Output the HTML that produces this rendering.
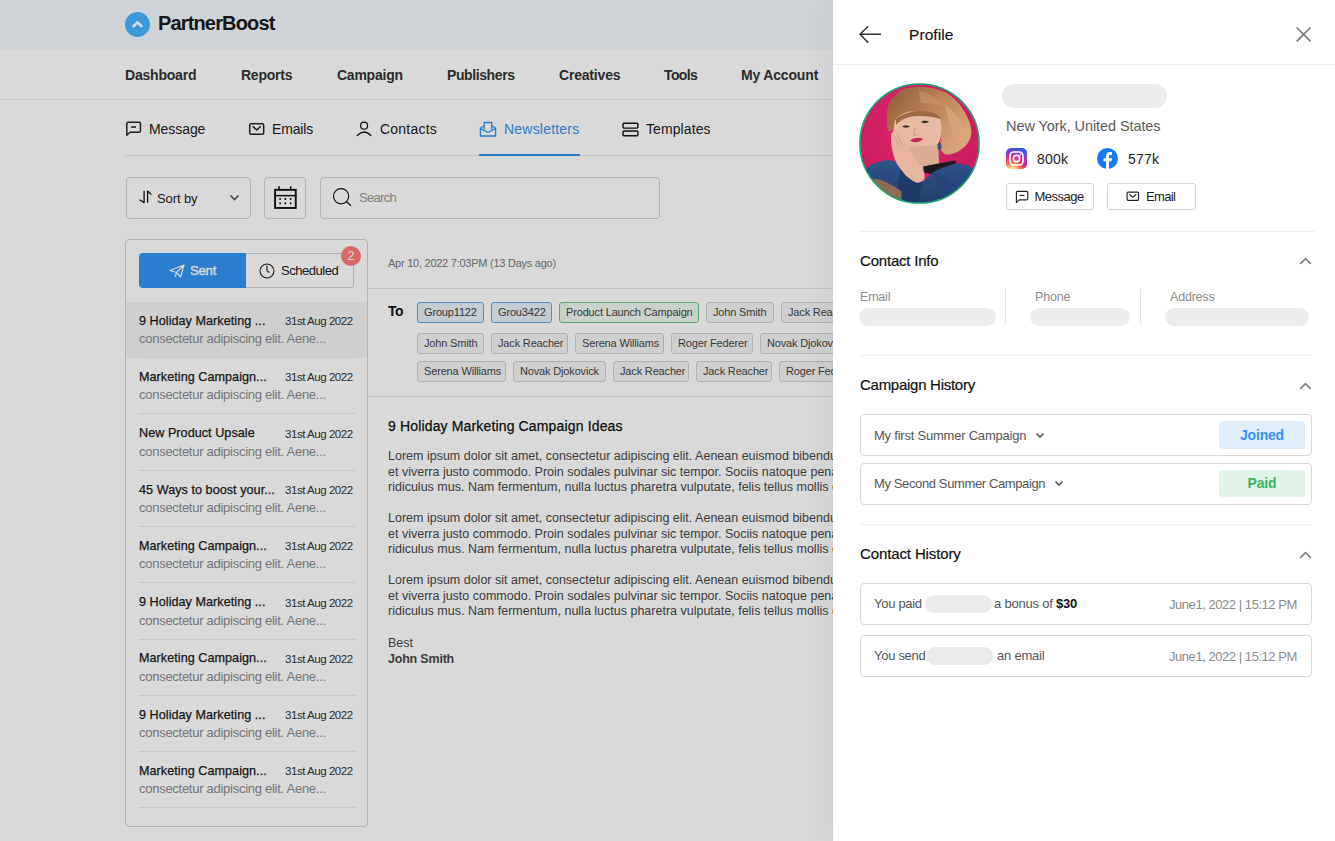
<!DOCTYPE html>
<html><head><meta charset="utf-8">
<style>
*{box-sizing:border-box;margin:0;padding:0}
html,body{width:1335px;height:841px;overflow:hidden;background:#fff;font-family:"Liberation Sans",sans-serif;color:#222}
.a{position:absolute;white-space:nowrap}
#app{position:absolute;left:0;top:0;width:1335px;height:841px;background:#fff;z-index:0}
#hdr{position:absolute;left:0;top:0;width:1335px;height:50px;background:#f4f9fe}
#nav{position:absolute;left:0;top:49px;width:1335px;height:50.5px;border-bottom:1px solid #ececec}
.nv{position:absolute;top:67.8px;font-size:14px;font-weight:700;color:#333;line-height:14px}
.st{position:absolute;top:122px;font-size:14px;color:#222;line-height:14px}
.ico{position:absolute}
#sub{position:absolute;left:125px;top:155px;width:708px;height:1px;background:#e6e6e6}
.box{position:absolute;border:1px solid #d2d2d2;border-radius:4px;background:#fff}
#panel{position:absolute;left:125px;top:239px;width:243px;height:588px;border:1px solid #d0d0d0;border-radius:4px;background:#fff}
.row{position:absolute;left:0;width:241px;height:56px}
.row .t{position:absolute;left:13px;top:13.2px;font-size:12.6px;font-weight:400;line-height:13px;color:#1a1a1a;letter-spacing:0.05px;-webkit-text-stroke:0.25px #1a1a1a}
.row .d{position:absolute;left:159px;top:13.5px;font-size:11.5px;line-height:12px;color:#333;letter-spacing:-0.45px}
.row .s{position:absolute;left:13px;top:30.6px;font-size:13px;line-height:13px;color:#8a8a8a;letter-spacing:-0.27px}
.row .ln{position:absolute;left:13px;right:11px;top:55.6px;height:1px;background:#ececec}
.chip{position:absolute;height:21px;border:1px solid #cfcfcf;background:#f4f4f4;border-radius:3px;font-size:11px;line-height:19.5px;padding:0 6px;color:#444;letter-spacing:-0.16px}
.chip.b{border-color:#62a4ea;background:#e6eff8}
.chip.g{border-color:#6cc88a;background:#eef7f0}
.p{position:absolute;left:388px;font-size:12.5px;line-height:15.5px;color:#474747;white-space:nowrap}
#ov{position:absolute;left:0;top:0;width:1335px;height:841px;background:rgba(0,0,0,0.15);z-index:1}
#drawer{z-index:2;position:absolute;left:833px;top:0;width:502px;height:841px;background:#fff;box-shadow:-10px 0 22px rgba(0,35,60,0.045)}
.dv{position:absolute;height:1px;background:#eeeeee}
.sk{position:absolute;background:#ececec;border-radius:12px}
.sec{position:absolute;left:27px;font-size:15px;line-height:15px;color:#111;letter-spacing:-0.2px;-webkit-text-stroke:0.2px #111}
.card{position:absolute;left:27px;width:452px;border:1px solid #d9d9d9;border-radius:4px;background:#fff}
.btn{position:absolute;height:27px;border:1px solid #d4d4d4;border-radius:3px;background:#fff;font-size:13px;line-height:25px;color:#222}
</style></head><body>
<div id="app">
  <div id="hdr">
    <div class="a" style="left:125px;top:12px;width:25px;height:25px;border-radius:50%;background:#47b4ff"></div>
    <svg class="a" style="left:125px;top:12px" width="25" height="25" viewBox="0 0 25 25"><path d="M8.5 14.2 L12.5 10.4 L16.5 14.2" fill="none" stroke="#fff" stroke-width="2.6" stroke-linecap="round" stroke-linejoin="round"/></svg>
    <div class="a" style="left:158px;top:13px;font-size:20px;line-height:20px;font-weight:700;color:#1c1c1c;letter-spacing:-0.85px">PartnerBoost</div>
  </div>
  <div id="nav"></div>
  <div class="nv" style="left:125px;letter-spacing:-0.21px">Dashboard</div>
  <div class="nv" style="left:241px;letter-spacing:-0.24px">Reports</div>
  <div class="nv" style="left:337px;letter-spacing:-0.24px">Campaign</div>
  <div class="nv" style="left:447px;letter-spacing:-0.4px">Publishers</div>
  <div class="nv" style="left:559px;letter-spacing:-0.19px">Creatives</div>
  <div class="nv" style="left:664px;letter-spacing:-0.6px">Tools</div>
  <div class="nv" style="left:741px;letter-spacing:-0.17px">My Account</div>

  <!-- subtabs -->
  <svg class="ico" style="left:125px;top:121px" width="17" height="16" viewBox="0 0 17 16"><path d="M1.8 14.3 V2.8 Q1.8 1.3 3.3 1.3 H14 Q15.5 1.3 15.5 2.8 V9.8 Q15.5 11.3 14 11.3 H5.2 Z" fill="none" stroke="#222" stroke-width="1.5" stroke-linejoin="round"/><path d="M6 6 H11" stroke="#222" stroke-width="1.5"/></svg>
  <div class="st" style="left:149px;letter-spacing:-0.07px">Message</div>
  <svg class="ico" style="left:248px;top:122px" width="17" height="14" viewBox="0 0 17 14"><rect x="1.7" y="1.7" width="14" height="10.6" rx="1.6" fill="none" stroke="#222" stroke-width="1.5"/><path d="M4.6 4.2 L8.7 8 L12.8 4.2" fill="none" stroke="#222" stroke-width="1.5"/></svg>
  <div class="st" style="left:272px;letter-spacing:-0.15px">Emails</div>
  <svg class="ico" style="left:350px;top:115px" width="30" height="25" viewBox="0 0 30 25"><circle cx="14.1" cy="10.7" r="3.5" fill="none" stroke="#111" stroke-width="1.2"/><path d="M7.3 20.5 Q14.1 13.5 20.8 20.5" fill="none" stroke="#111" stroke-width="1.3" stroke-linecap="round"/></svg>
  <div class="st" style="left:380px;letter-spacing:0.22px">Contacts</div>
  <svg class="ico" style="left:479px;top:121px" width="18" height="16" viewBox="0 0 18 16"><path d="M1.7 6.8 L5.2 4.8 M12.7 4.8 L16.3 6.8" fill="none" stroke="#3593f0" stroke-width="1.3"/><path d="M1.4 6.6 V14.5 Q1.4 15 1.9 15 H16.1 Q16.6 15 16.6 14.5 V6.6" fill="none" stroke="#3593f0" stroke-width="1.3"/><path d="M1.8 7.6 L9 11.6 L16.2 7.6" fill="none" stroke="#3593f0" stroke-width="1.3"/><path d="M5.2 8.6 V1.5 H12.7 V8.6" fill="none" stroke="#3593f0" stroke-width="1.3"/></svg>
  <div class="st" style="left:504px;letter-spacing:0.21px;color:#3593f0">Newsletters</div>
  <div class="a" style="left:479px;top:153.6px;width:101px;height:2.6px;background:#3593f0;z-index:2"></div>
  <svg class="ico" style="left:615px;top:115px" width="30" height="25" viewBox="0 0 30 25"><rect x="8" y="8.3" width="14.9" height="4.8" rx="1" fill="none" stroke="#111" stroke-width="1.4"/><rect x="8" y="16" width="14.9" height="4.8" rx="1" fill="none" stroke="#111" stroke-width="1.4"/></svg>
  <div class="st" style="left:646px;letter-spacing:0.09px">Templates</div>
  <div id="sub"></div>

  <!-- toolbar -->
  <div class="box" style="left:126px;top:177px;width:125px;height:42px"></div>
  <svg class="ico" style="left:139px;top:190px" width="14" height="14" viewBox="0 0 14 14"><path d="M5.1 0.8 V12.6 L0.6 9.8" fill="none" stroke="#111" stroke-width="1.25" stroke-linejoin="round"/><path d="M8.6 12.8 V1 L12.4 4.6" fill="none" stroke="#111" stroke-width="1.25" stroke-linejoin="round"/></svg>
  <div class="a" style="left:157px;top:191.5px;font-size:13px;line-height:13px;color:#222;letter-spacing:-0.1px">Sort by</div>
  <svg class="ico" style="left:229px;top:194px" width="11" height="8" viewBox="0 0 11 8"><path d="M1.5 1.5 L5.5 5.5 L9.5 1.5" fill="none" stroke="#555" stroke-width="1.6"/></svg>
  <div class="box" style="left:264px;top:177px;width:42px;height:42px"></div>
  <svg class="ico" style="left:273px;top:185px" width="25" height="25" viewBox="0 0 25 25"><rect x="2.05" y="4.85" width="20.7" height="18.1" fill="none" stroke="#111" stroke-width="1.9"/><path d="M1.5 10.65 H23.5" stroke="#111" stroke-width="1.5"/><path d="M6.1 1.2 V4.5 M17.7 1.2 V4.5" stroke="#111" stroke-width="1.5"/><g fill="#111"><rect x="6.3" y="12.9" width="1.6" height="2.2" rx="0.7"/><rect x="11.5" y="12.9" width="1.6" height="2.2" rx="0.7"/><rect x="16.8" y="12.9" width="1.6" height="2.2" rx="0.7"/><rect x="6.3" y="17.2" width="1.6" height="2.2" rx="0.7"/><rect x="11.5" y="17.2" width="1.6" height="2.2" rx="0.7"/><rect x="16.8" y="17.2" width="1.6" height="2.2" rx="0.7"/></g></svg>
  <div class="box" style="left:320px;top:177px;width:340px;height:42px"></div>
  <svg class="ico" style="left:330px;top:185px" width="24" height="24" viewBox="0 0 24 24"><circle cx="11.1" cy="11.2" r="7.6" fill="none" stroke="#111" stroke-width="1.2"/><path d="M16.6 16.7 L21 20.7" stroke="#111" stroke-width="1.2"/></svg>
  <div class="a" style="left:359px;top:191px;font-size:13px;line-height:13px;color:#9a9a9a;letter-spacing:-0.7px">Search</div>

  <!-- list panel -->
  <div id="panel">
    <div class="a" style="left:13px;top:13px;width:107px;height:35px;background:#3396f3;border-radius:4px 0 0 4px"></div>
    <div class="a" style="left:120px;top:13px;width:108px;height:35px;border:1px solid #cfcfcf;border-left:none;border-radius:0 4px 4px 0"></div>
    <svg class="ico" style="left:43px;top:24px" width="16" height="14" viewBox="0 0 16 14"><path d="M1 6.5 L15 1 L11.5 13 L7.5 8.5 Z M7.5 8.5 L15 1 M7.5 8.5 L6 13" fill="none" stroke="#fff" stroke-width="1.2" stroke-linejoin="round"/></svg>
    <div class="a" style="left:64px;top:23.8px;font-size:13px;line-height:13px;font-weight:400;color:#fff;letter-spacing:-0.15px;-webkit-text-stroke:0.4px #fff">Sent</div>
    <svg class="ico" style="left:133px;top:23px" width="16" height="16" viewBox="0 0 16 16"><circle cx="8" cy="8" r="7" fill="none" stroke="#222" stroke-width="1.1"/><path d="M8 2.5 V8 L10.5 9.5" fill="none" stroke="#222" stroke-width="1.1"/></svg>
    <div class="a" style="left:155px;top:23.8px;font-size:13px;line-height:13px;color:#222;letter-spacing:-0.47px">Scheduled</div>
    <div class="a" style="left:215px;top:6px;width:20px;height:20px;border-radius:50%;background:#ff7c7c;color:#fff;font-size:12.5px;line-height:20px;text-align:center">2</div>
  </div>
  <div id="rows" class="a" style="left:126px;top:301.5px;width:241px;height:520px">
    <div class="row" style="top:0.0px;background:#f4f4f4;"><div class="t">9 Holiday Marketing ...</div><div class="d">31st Aug 2022</div><div class="s">consectetur adipiscing elit. Aene...</div><div class="ln"></div></div>
    <div class="row" style="top:56.3px;"><div class="t">Marketing Campaign...</div><div class="d">31st Aug 2022</div><div class="s">consectetur adipiscing elit. Aene...</div><div class="ln"></div></div>
    <div class="row" style="top:112.6px;"><div class="t">New Product Upsale</div><div class="d">31st Aug 2022</div><div class="s">consectetur adipiscing elit. Aene...</div><div class="ln"></div></div>
    <div class="row" style="top:168.9px;"><div class="t">45 Ways to boost your...</div><div class="d">31st Aug 2022</div><div class="s">consectetur adipiscing elit. Aene...</div><div class="ln"></div></div>
    <div class="row" style="top:225.2px;"><div class="t">Marketing Campaign...</div><div class="d">31st Aug 2022</div><div class="s">consectetur adipiscing elit. Aene...</div><div class="ln"></div></div>
    <div class="row" style="top:281.5px;"><div class="t">9 Holiday Marketing ...</div><div class="d">31st Aug 2022</div><div class="s">consectetur adipiscing elit. Aene...</div><div class="ln"></div></div>
    <div class="row" style="top:337.8px;"><div class="t">Marketing Campaign...</div><div class="d">31st Aug 2022</div><div class="s">consectetur adipiscing elit. Aene...</div><div class="ln"></div></div>
    <div class="row" style="top:394.1px;"><div class="t">9 Holiday Marketing ...</div><div class="d">31st Aug 2022</div><div class="s">consectetur adipiscing elit. Aene...</div><div class="ln"></div></div>
    <div class="row" style="top:450.4px;"><div class="t">Marketing Campaign...</div><div class="d">31st Aug 2022</div><div class="s">consectetur adipiscing elit. Aene...</div><div class="ln"></div></div>
  </div>

  <!-- email view -->
  <div class="a" style="left:388px;top:258.3px;font-size:11px;line-height:11px;color:#7a7a7a;letter-spacing:-0.25px">Apr 10, 2022 7:03PM (13 Days ago)</div>
  <div class="a" style="left:368px;top:288px;width:465px;height:1px;background:#e6e6e6"></div>
  <div class="a" style="left:388px;top:304px;font-size:14px;line-height:14px;font-weight:700;color:#111;letter-spacing:-0.6px">To</div>
  <div id="chips" class="a" style="left:0;top:0;width:833px;height:400px;overflow:hidden">
  <div class="chip b" style="left:417px;top:302px;width:67px">Group1122</div>
  <div class="chip b" style="left:491px;top:302px;width:61px">Grou3422</div>
  <div class="chip g" style="left:559px;top:302px;width:140px">Product Launch Campaign</div>
  <div class="chip " style="left:706px;top:302px;width:68px">John Smith</div>
  <div class="chip " style="left:781px;top:302px;width:79px">Jack Reacher</div>
  <div class="chip " style="left:417px;top:333px;width:67px">John Smith</div>
  <div class="chip " style="left:491px;top:333px;width:77px">Jack Reacher</div>
  <div class="chip " style="left:575px;top:333px;width:89px">Serena Williams</div>
  <div class="chip " style="left:671px;top:333px;width:82px">Roger Federer</div>
  <div class="chip " style="left:760px;top:333px;width:92px">Novak Djokovick</div>
  <div class="chip " style="left:417px;top:361px;width:89px">Serena Williams</div>
  <div class="chip " style="left:513px;top:361px;width:93px">Novak Djokovick</div>
  <div class="chip " style="left:613px;top:361px;width:76px">Jack Reacher</div>
  <div class="chip " style="left:696px;top:361px;width:76px">Jack Reacher</div>
  <div class="chip " style="left:779px;top:361px;width:82px">Roger Federer</div>
  </div>
  <div class="a" style="left:368px;top:396px;width:465px;height:1px;background:#e6e6e6"></div>
  <div class="a" style="left:388px;top:419px;font-size:14px;line-height:14px;color:#111;letter-spacing:0.15px;-webkit-text-stroke:0.25px #111">9 Holiday Marketing Campaign Ideas</div>
  <div id="body" class="a" style="left:0;top:0;width:833px;height:700px;overflow:hidden">
  <div class="p" style="top:449px">Lorem ipsum dolor sit amet, consectetur adipiscing elit. Aenean euismod bibendum laoreet.<br>et viverra justo commodo. Proin sodales pulvinar sic tempor. Sociis natoque penatibus et magnis dis parturient montes, nascetur<br>ridiculus mus. Nam fermentum, nulla luctus pharetra vulputate, felis tellus mollis orci, sed rhoncus sapien nunc eget.</div>
  <div class="p" style="top:511px">Lorem ipsum dolor sit amet, consectetur adipiscing elit. Aenean euismod bibendum laoreet.<br>et viverra justo commodo. Proin sodales pulvinar sic tempor. Sociis natoque penatibus et magnis dis parturient montes, nascetur<br>ridiculus mus. Nam fermentum, nulla luctus pharetra vulputate, felis tellus mollis orci, sed rhoncus sapien nunc eget.</div>
  <div class="p" style="top:573px">Lorem ipsum dolor sit amet, consectetur adipiscing elit. Aenean euismod bibendum laoreet.<br>et viverra justo commodo. Proin sodales pulvinar sic tempor. Sociis natoque penatibus et magnis dis parturient montes, nascetur<br>ridiculus mus. Nam fermentum, nulla luctus pharetra vulputate, felis tellus mollis orci, sed rhoncus sapien nunc eget.</div>
  <div class="p" style="top:636px">Best<br><b style="letter-spacing:-0.2px">John Smith</b></div>
  </div>
</div>
<div id="ov"></div>
<div id="drawer">
  <svg class="a" style="left:25px;top:25px" width="24" height="19" viewBox="0 0 24 19"><path d="M23 9.3 H2 M10.2 1.2 L2 9.3 L10.2 17.6" fill="none" stroke="#333" stroke-width="1.5"/></svg>
  <div class="a" style="left:76px;top:26.4px;font-size:15.5px;line-height:17px;font-weight:400;color:#111;letter-spacing:0.08px;-webkit-text-stroke:0.15px #111">Profile</div>
  <svg class="a" style="left:462px;top:26.3px" width="17" height="17" viewBox="0 0 17 17"><path d="M1.7 1.5 L15.5 15.3 M15.5 1.5 L1.7 15.3" fill="none" stroke="#7a7a7a" stroke-width="1.7"/></svg>
  <div class="dv" style="left:0;top:64px;width:502px"></div>

  <svg class="a" style="left:26px;top:83px" width="121" height="121" viewBox="0 0 121 121">
    <defs><clipPath id="cc"><circle cx="60.5" cy="60.5" r="59.3"/></clipPath>
    <radialGradient id="pk" cx="0.45" cy="0.4" r="0.7"><stop offset="0" stop-color="#d8286a"/><stop offset="1" stop-color="#c9185c"/></radialGradient>
    <linearGradient id="hr" x1="0" y1="0" x2="1" y2="0.6"><stop offset="0" stop-color="#8e5a36"/><stop offset="0.45" stop-color="#b57c50"/><stop offset="1" stop-color="#d9a679"/></linearGradient>
    <linearGradient id="jk" x1="0" y1="0" x2="0" y2="1"><stop offset="0" stop-color="#30548a"/><stop offset="1" stop-color="#213d6c"/></linearGradient></defs>
    <g clip-path="url(#cc)">
      <rect width="121" height="121" fill="url(#pk)"/>
      <path d="M29.2 48 C27 42 27 30 29.2 23.3 C31 17 34 14 36.2 12.5 C40 8 44 6 47 5.5 C54 3.5 60 3.5 65.6 4 C72 5 78 6 82.6 7.8 C88 10 92 13 95 15.5 C99 19 102 23 104.2 26.4 C107 31 109 35 110.4 38.7 C112 44 113 48 112 52.6 C111 57 109 60 107.3 61.9 C103 66 100 68 96.5 69.7 C93 71 89 72 85.7 71.2 C83 69 82 67 81 65 L82.6 48 L79.5 37.2 C76 33 73 32 70.2 31 C65 29.5 60 29 54.7 29.5 C50 30 46 31 42.4 32.6 C39 35 37 37 36.2 40.3 C34.5 43 33.5 46 33.1 48 Z" fill="url(#hr)"/>
      <path d="M86 22 C94 28 102 36 108 48 C106 56 102 62 96 66 C94 56 92 44 86 22 Z" fill="#d8a478" opacity="0.85"/>
      <path d="M60 8 C70 10 80 16 88 24 C80 22 70 20 62 20 Z" fill="#c89262" opacity="0.7"/>
      <path d="M36.2 37.2 C40 31 48 28 57.8 27.9 C68 28 76 30 79.5 32.6 C82 38 83 44 82.6 48 C82 56 80 60 76.4 63.5 C72 68 66 70.4 61 70.4 C54 70 47 67 42.4 63.5 C38 58 35 55 34.6 51 C34 46 35 41 36.2 37.2 Z" fill="#e9bba4"/>
      <path d="M37 36 C44 30 56 27 66 28 C74 29 80 31 82 36 C76 34 68 33 60 33 C50 33 42 36 37 42 Z" fill="#a06a42"/>
      <path d="M43 43.5 C45 42 49 42 51 43.5 C49 45 45 45 43 43.5 Z" fill="#3a2a26"/>
      <path d="M62 39 C64 37.5 68 37.5 70 38.5 C68 40.5 64 40.5 62 39 Z" fill="#3a2a26"/>
      <path d="M56 45 L55 52 L58 53" fill="none" stroke="#c99480" stroke-width="1"/>
      <path d="M51 57.5 C54 55 60 54 64 55.5 C62 59.5 55 60.5 51 57.5 Z" fill="#c2245a"/>
      <path d="M50 64 L79.5 62 L80 83.6 L64 86 L52 76 Z" fill="#dcab94"/>
      <ellipse cx="80.5" cy="63.5" rx="2" ry="3.8" fill="#3f5574"/>
      <path d="M64 83.6 L79.5 80.5 L96.5 77.4 L98 86.7 L73.3 91.3 L65.6 89.7 Z" fill="#1a1a20"/>
      <path d="M0 90 L5.3 86.7 C10 82 15 80 19.2 78.9 C25 77.5 29 77 33.1 77.4 C37 79 40 81 42.4 83.6 L64 99 L67.1 96 L73.3 89.7 C82 85 90 82 96.5 80.5 C102 80 106 81 110.4 83.6 C114 85 117 87 121 89.7 V121 H0 Z" fill="url(#jk)"/>
      <path d="M42.4 83.6 L64 99 L58 121 H36 C38 108 40 94 42.4 83.6 Z" fill="#1f3a66"/>
      <path d="M73.3 89.7 C86 90 98 98 104 121 H84 C82 108 78 98 73.3 89.7 Z" fill="#26457a"/>
      <path d="M32.3 50.3 C35 47.5 39 47 40.8 48 C43 52 44 55 45.5 58.8 C48 63 50 67 51.7 69.7 C56 75 60 79 62.5 83.6 C65 88 66 92 65.6 96 C63 99 60 100 57.8 99.8 C53 98 50 95 47 92.8 C43 88 40 84 37.7 80.5 C35 75 34 70 33.1 66.6 C32 61 31.8 55 32.3 50.3 Z" fill="#e7b5a0"/>
      <path d="M36 54 L40 64 M38.5 52 L43 62" stroke="#cf9a86" stroke-width="0.8"/>
      <path d="M14.5 96 C19 96 23 97 26.9 99 C33 102 38 105 42.4 108.3 L42.4 117.6 C35 117 27 116 19.2 114.5 C15 110 12 106 11.5 103.7 Z" fill="#8c6c54"/>
    </g>
    <circle cx="60.5" cy="60.5" r="59.6" fill="none" stroke="#1f9f6f" stroke-width="1.5"/>
  </svg>

  <div class="sk" style="left:169px;top:84px;width:165px;height:24px"></div>
  <div class="a" style="left:173px;top:119px;font-size:14.5px;line-height:15px;color:#5a5a5a;letter-spacing:-0.08px">New York, United States</div>
  <svg class="a" style="left:173px;top:148px" width="21" height="21" viewBox="0 0 21 21">
    <defs><radialGradient id="ig" cx="0.3" cy="1.07" r="1.5"><stop offset="0" stop-color="#fdf497"/><stop offset="0.05" stop-color="#fdf497"/><stop offset="0.3" stop-color="#fd5949"/><stop offset="0.45" stop-color="#d6249f"/><stop offset="0.75" stop-color="#285aeb"/></radialGradient></defs>
    <rect width="21" height="21" rx="5" fill="url(#ig)"/>
    <rect x="4" y="4" width="13" height="13" rx="3.8" fill="none" stroke="#fff" stroke-width="1.6"/>
    <circle cx="10.5" cy="10.5" r="3.1" fill="none" stroke="#fff" stroke-width="1.6"/>
    <circle cx="14.4" cy="6.6" r="0.9" fill="#fff"/>
  </svg>
  <div class="a" style="left:204px;top:152px;font-size:14px;line-height:14px;color:#222;letter-spacing:0.24px">800k</div>
  <svg class="a" style="left:264px;top:148px" width="21" height="21" viewBox="0 0 21 21">
    <circle cx="10.5" cy="10.5" r="10.5" fill="#1877f2"/>
    <path d="M11.9 21 V13.3 H14.5 L14.9 10.3 H11.9 V8.4 C11.9 7.5 12.2 6.9 13.4 6.9 H15 V4.2 C14.7 4.2 13.8 4.1 12.8 4.1 C10.6 4.1 9.1 5.4 9.1 7.9 V10.3 H6.5 V13.3 H9.1 V21 Z" fill="#fff"/>
  </svg>
  <div class="a" style="left:295px;top:152px;font-size:14px;line-height:14px;color:#222;letter-spacing:0.24px">577k</div>
  <div class="btn" style="left:173px;top:183px;width:88px"></div>
  <svg class="a" style="left:182px;top:190px" width="14" height="14" viewBox="0 0 14 14"><path d="M1.4 12.6 V2.6 Q1.4 1.4 2.6 1.4 H11.6 Q12.8 1.4 12.8 2.6 V8.6 Q12.8 9.8 11.6 9.8 H4.2 Z" fill="none" stroke="#222" stroke-width="1.15" stroke-linejoin="round"/><path d="M4.6 5.4 H9.4" stroke="#222" stroke-width="1.15"/></svg>
  <div class="a" style="left:201.5px;top:190px;font-size:13px;line-height:13px;color:#222;letter-spacing:-0.5px">Message</div>
  <div class="btn" style="left:274px;top:183px;width:89px"></div>
  <svg class="a" style="left:293px;top:191px" width="14" height="11" viewBox="0 0 14 11"><rect x="1.1" y="1.1" width="11.4" height="8.2" rx="1" fill="none" stroke="#222" stroke-width="1.15"/><path d="M3.3 3.2 L6.8 6.2 L10.3 3.2" fill="none" stroke="#222" stroke-width="1.15"/></svg>
  <div class="a" style="left:313px;top:190px;font-size:13px;line-height:13px;color:#222;letter-spacing:-0.65px">Email</div>
  <div class="dv" style="left:27px;top:231px;width:455px"></div>

  <div class="sec" style="top:252.7px">Contact Info</div>
  <svg class="a" style="left:466px;top:256.6px" width="13" height="8" viewBox="0 0 13 8"><path d="M1.2 6.8 L6.5 1.6 L11.8 6.8" fill="none" stroke="#808080" stroke-width="1.7"/></svg>
  <div class="a" style="left:27px;top:291px;font-size:12.5px;line-height:13px;color:#8c8c8c;letter-spacing:-0.2px">Email</div>
  <div class="a" style="left:202px;top:291px;font-size:12.5px;line-height:13px;color:#8c8c8c;letter-spacing:-0.2px">Phone</div>
  <div class="a" style="left:337px;top:291px;font-size:12.5px;line-height:13px;color:#8c8c8c;letter-spacing:-0.2px">Address</div>
  <div class="a" style="left:172px;top:289px;width:1px;height:35px;background:#e3e3e3"></div>
  <div class="a" style="left:307px;top:289px;width:1px;height:35px;background:#e3e3e3"></div>
  <div class="sk" style="left:26px;top:308px;width:137px;height:18px;border-radius:9px"></div>
  <div class="sk" style="left:197px;top:308px;width:100px;height:18px;border-radius:9px"></div>
  <div class="sk" style="left:332px;top:308px;width:144px;height:18px;border-radius:9px"></div>
  <div class="dv" style="left:27px;top:355px;width:450px"></div>

  <div class="sec" style="top:377.4px;letter-spacing:-0.27px">Campaign History</div>
  <svg class="a" style="left:466px;top:381.6px" width="13" height="8" viewBox="0 0 13 8"><path d="M1.2 6.8 L6.5 1.6 L11.8 6.8" fill="none" stroke="#808080" stroke-width="1.7"/></svg>
  <div class="card" style="top:414px;height:42px"></div>
  <div class="a" style="left:41px;top:429px;font-size:13px;line-height:13px;color:#555;letter-spacing:-0.22px">My first Summer Campaign</div>
  <svg class="a" style="left:202px;top:432px" width="10" height="7" viewBox="0 0 10 7"><path d="M1.5 1.5 L5 5 L8.5 1.5" fill="none" stroke="#555" stroke-width="1.6"/></svg>
  <div class="a" style="left:386px;top:421px;width:86px;height:28px;border-radius:4px;background:#e1eefc;color:#3590ee;font-size:14px;font-weight:700;line-height:28px;text-align:center;letter-spacing:-0.2px">Joined</div>
  <div class="card" style="top:463px;height:41.5px"></div>
  <div class="a" style="left:41px;top:477px;font-size:13px;line-height:13px;color:#555;letter-spacing:-0.38px">My Second Summer Campaign</div>
  <svg class="a" style="left:221px;top:480px" width="10" height="7" viewBox="0 0 10 7"><path d="M1.5 1.5 L5 5 L8.5 1.5" fill="none" stroke="#555" stroke-width="1.6"/></svg>
  <div class="a" style="left:386px;top:470px;width:86px;height:27px;border-radius:4px;background:#e2f5e8;color:#3bb565;font-size:14px;font-weight:700;line-height:27px;text-align:center;letter-spacing:-0.2px">Paid</div>
  <div class="dv" style="left:27px;top:524px;width:450px"></div>

  <div class="sec" style="top:546px;letter-spacing:-0.12px">Contact History</div>
  <svg class="a" style="left:466px;top:550.6px" width="13" height="8" viewBox="0 0 13 8"><path d="M1.2 6.8 L6.5 1.6 L11.8 6.8" fill="none" stroke="#808080" stroke-width="1.7"/></svg>
  <div class="card" style="top:583px;height:42px"></div>
  <div class="a" style="left:41px;top:597px;font-size:13px;line-height:13px;color:#555;letter-spacing:-0.29px">You paid</div>
  <div class="sk" style="left:92px;top:594.8px;width:67px;height:18.5px;border-radius:9.5px"></div>
  <div class="a" style="left:161px;top:597px;font-size:13px;line-height:13px;color:#555;letter-spacing:-0.21px">a bonus of <b style="color:#111">$30</b></div>
  <div class="a" style="left:336px;top:598px;font-size:13px;line-height:13px;color:#8c8c8c;letter-spacing:-0.45px">June1, 2022 | 15:12 PM</div>
  <div class="card" style="top:635px;height:42px"></div>
  <div class="a" style="left:41px;top:649px;font-size:13px;line-height:13px;color:#555;letter-spacing:-0.29px">You send</div>
  <div class="sk" style="left:93px;top:646.8px;width:67px;height:18.5px;border-radius:9.5px"></div>
  <div class="a" style="left:164px;top:649px;font-size:13px;line-height:13px;color:#555;letter-spacing:-0.21px">an email</div>
  <div class="a" style="left:336px;top:650px;font-size:13px;line-height:13px;color:#8c8c8c;letter-spacing:-0.45px">June1, 2022 | 15:12 PM</div>
</div>
</body></html>
